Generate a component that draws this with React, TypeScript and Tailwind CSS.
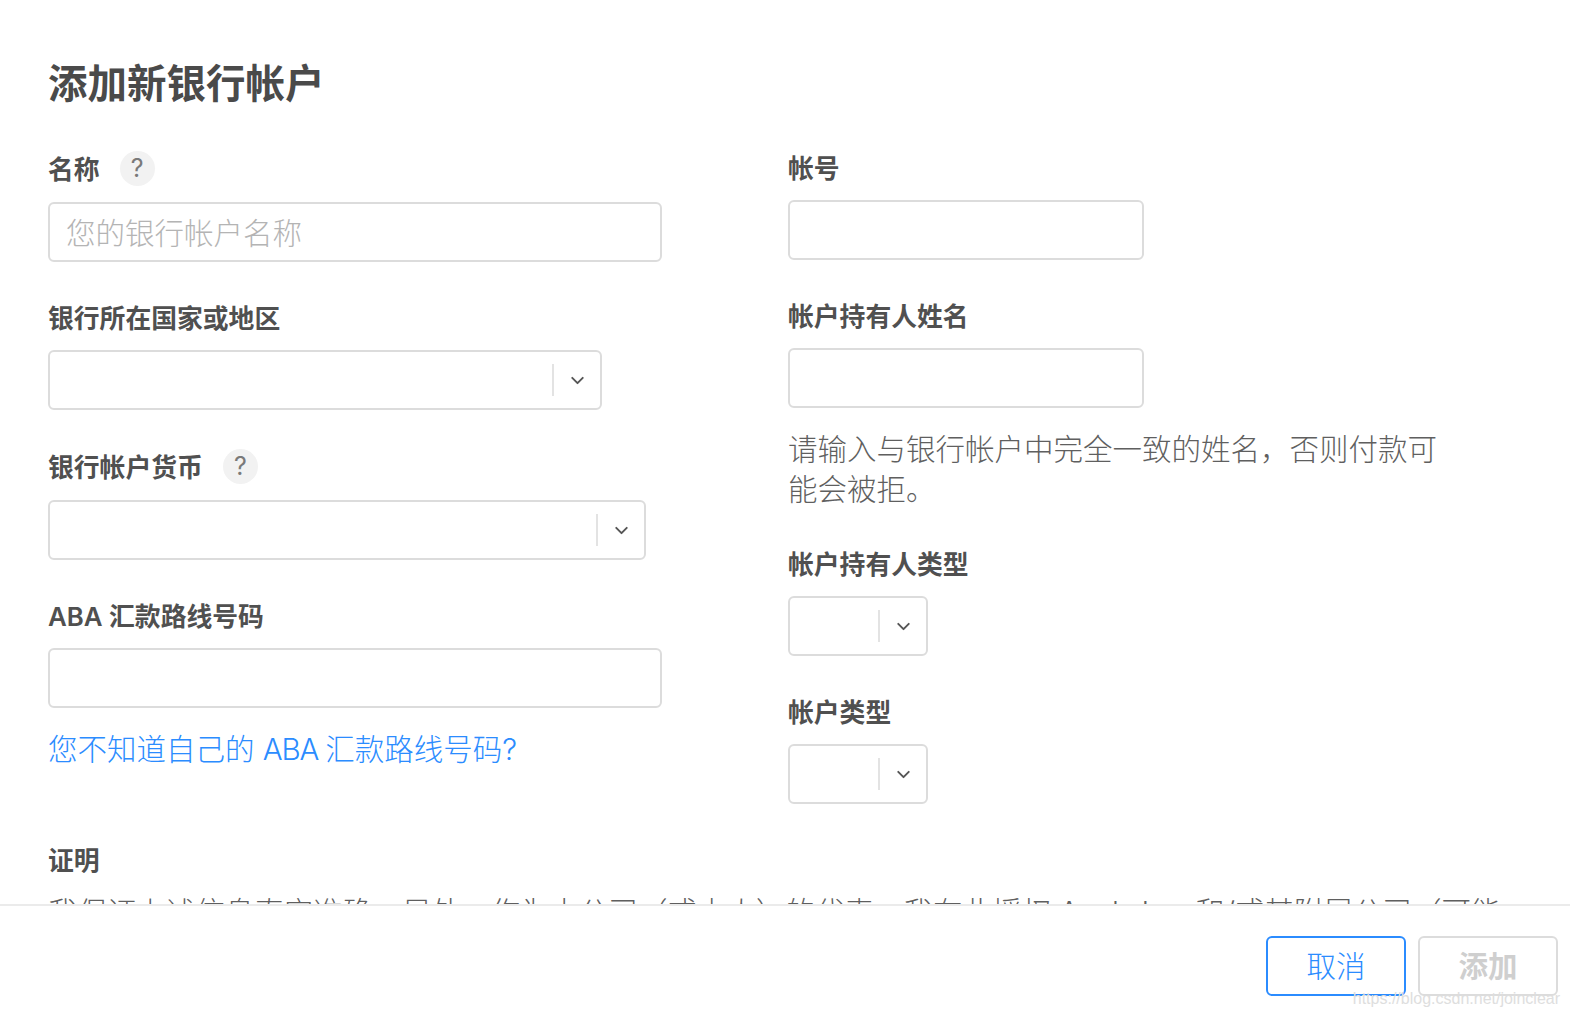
import React from 'react';
import { ChevronDown } from 'lucide-react';

const Label = ({ text, help }: { text: string; help?: boolean }) => (
  <div className={`flex items-center text-[25.8px] font-semibold text-[#505050] mb-[14px] ${help ? 'h-[38px]' : 'h-[36px]'}`}>
    <span className="pt-[2px] leading-[36px]">{text}</span>
    {help && (
      <span className="ml-[20px] mb-[2px] flex h-[35px] w-[35px] items-center justify-center rounded-full bg-[#f2f2f2] pt-[2px] text-[25px] font-normal text-[#7a7a7a]">?</span>
    )}
  </div>
);

const TextInput = ({ width, placeholder }: { width: string; placeholder?: string }) => (
  <div className={`${width} flex h-[60px] items-center rounded-[6px] border-2 border-[#dcdcdc] px-[16px] pt-[2px] text-[29.5px] font-light text-[#b4b4b4]`}>
    {placeholder}
  </div>
);

const SelectBox = ({ width }: { width: string }) => (
  <div className={`${width} flex h-[60px] items-center justify-end rounded-[6px] border-2 border-[#dcdcdc]`}>
    <div className="h-[32px] w-[2px] bg-[#e3e3e3]" />
    <div className="flex w-[46px] items-center justify-center">
      <ChevronDown className="h-[21px] w-[21px] text-[#555555]" strokeWidth={2.2} />
    </div>
  </div>
);

export default function App() {
  return (
    <div className="h-[1018px] w-[1570px] overflow-hidden bg-white font-['Inter','Noto_Sans_CJK_SC',sans-serif] relative">
      <div className="h-[904px] overflow-hidden pl-[48px] pr-[70px]">
        <h1 className="pt-[56px] h-[150px] text-[39.5px] leading-[56px] font-bold text-[#4a4a4a]">添加新银行帐户</h1>

        <div className="grid grid-cols-[740px_1fr]">
          <div>
            <Label text="名称" help />
            <TextInput width="w-[614px]" placeholder="您的银行帐户名称" />

            <div className="mt-[38px]">
              <Label text="银行所在国家或地区" />
              <SelectBox width="w-[554px]" />
            </div>

            <div className="mt-[38px]">
              <Label text="银行帐户货币" help />
              <SelectBox width="w-[598px]" />
            </div>

            <div className="mt-[38px]">
              <Label text="ABA 汇款路线号码" />
              <TextInput width="w-[614px]" />
            </div>

            <a className="mt-[21px] block text-[29.5px] leading-[40px] font-light text-[#2b8cff]">
              您不知道自己的 <span className="tracking-[-1.2px]">ABA </span>汇款路线号码?
            </a>
          </div>

          <div>
            <Label text="帐号" />
            <TextInput width="w-[356px]" />

            <div className="mt-[38px]">
              <Label text="帐户持有人姓名" />
              <TextInput width="w-[356px]" />
            </div>

            <p className="mt-[21px] w-[660px] text-[29.5px] leading-[40px] font-light text-[#5f5f5f]">请输入与银行帐户中完全一致的姓名，否则付款可能会被拒。</p>

            <div className="mt-[37px]">
              <Label text="帐户持有人类型" />
              <SelectBox width="w-[140px]" />
            </div>

            <div className="mt-[38px]">
              <Label text="帐户类型" />
              <SelectBox width="w-[140px]" />
            </div>
          </div>
        </div>

        <div className="mt-[38px]">
          <Label text="证明" />
          <p className="text-[29.5px] leading-[40px] font-light whitespace-nowrap text-[#5f5f5f]">
            我保证上述信息真实准确。另外，作为本公司（或本人）的代表，我在此授权 <span className="tracking-[-0.9px]">Apple Inc. </span>和/或其附属公司（可能
          </p>
        </div>
      </div>

      <div className="flex h-[114px] justify-end gap-[12px] border-t-2 border-[#ebebeb] pt-[30px] pr-[12px]">
        <button className="h-[60px] w-[140px] rounded-[6px] border-2 border-[#2b8cff] text-[29.5px] font-light text-[#2b8cff]">取消</button>
        <button className="h-[60px] w-[140px] rounded-[6px] border-2 border-[#dcdcdc] text-[29.5px] font-bold text-[#cfcfcf]">添加</button>
      </div>

      <span className="absolute right-[10px] top-[989px] font-['Liberation_Sans',sans-serif] text-[16px] leading-[20px] text-[#dedede]">https://blog.csdn.net/joinclear</span>
    </div>
  );
}
